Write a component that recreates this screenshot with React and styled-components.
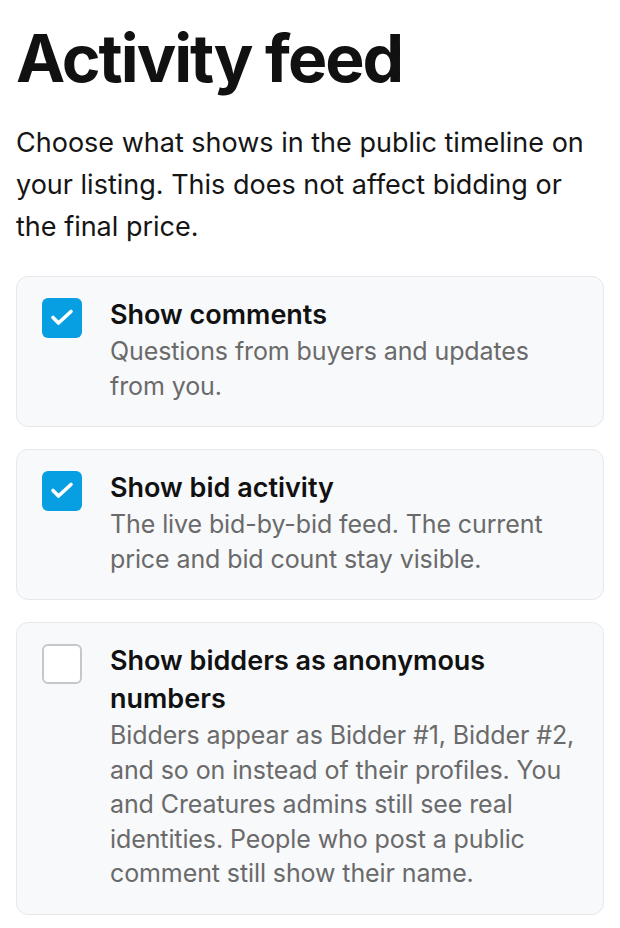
import React, { useState } from 'react';
import styled, { createGlobalStyle } from 'styled-components';

const GlobalStyle = createGlobalStyle`
  body {
    margin: 0;
    background: #ffffff;
    font-family: Inter, "Noto Sans", sans-serif;
    color: #111111;
  }
`

const Page = styled.div`
  padding: 20px 16px 14px 16px;
`

const Title = styled.h1`
  margin: 0;
  font-size: 66px;
  font-weight: 700;
  letter-spacing: -2px;
  line-height: 76px;
`

const Intro = styled.p`
  margin: 26px 0 0 0;
  font-size: 27px;
  line-height: 42px;
  letter-spacing: 0;
  color: #151515;
`

const List = styled.div`
  display: flex;
  flex-direction: column;
  gap: 22px;
  margin-top: 28px;
`

const Card = styled.label`
  display: flex;
  gap: 28px;
  padding: 21px 24px 23px 25px;
  background: #f8f9fb;
  border: 1px solid #e6e8eb;
  border-radius: 12px;
  cursor: pointer;
`

const Box = styled.span`
  flex: none;
  width: 40px;
  height: 40px;
  box-sizing: border-box;
  border-radius: 6px;
  display: flex;
  align-items: center;
  justify-content: center;
  background: ${(p) => (p.$on ? '#079fe2' : '#ffffff')};
  border: ${(p) => (p.$on ? 'none' : '2px solid #c4c7cb')};
`

const Text = styled.div`
  display: flex;
  flex-direction: column;
  margin-top: -2px;
`

const Label = styled.span`
  font-size: 27px;
  font-weight: 600;
  line-height: 38px;
  letter-spacing: 0;
  color: #111111;
`

const Desc = styled.span`
  font-size: 25px;
  line-height: 34.5px;
  letter-spacing: -0.1px;
  color: #6a6a6a;
`

const Check = () => (
  <svg width="24" height="24" viewBox="0 0 24 24" fill="none">
    <path d="M3 11.5l5.5 5.5L21 5.5" stroke="#fff" strokeWidth="3.6" strokeLinecap="round" strokeLinejoin="round" />
  </svg>
)

const options = [
  {
    id: 'comments',
    label: 'Show comments',
    desc: 'Questions from buyers and updates from you.',
    on: true,
  },
  {
    id: 'bids',
    label: 'Show bid activity',
    desc: 'The live bid-by-bid feed. The current price and bid count stay visible.',
    on: true,
  },
  {
    id: 'anon',
    label: 'Show bidders as anonymous numbers',
    desc: 'Bidders appear as Bidder #1, Bidder #2, and so on instead of their profiles. You and Creatures admins still see real identities. People who post a public comment still show their name.',
    on: false,
  },
]

const App = () => {
  const [state, setState] = useState(
    Object.fromEntries(options.map((o) => [o.id, o.on]))
  );

  const toggle = (id) => {
    setState({ ...state, [id]: !state[id] });
  }

  return (
    <>
      <GlobalStyle />
      <Page>
        <Title>Activity feed</Title>
        <Intro>
          Choose what shows in the public timeline on your listing. This does not affect bidding or the final price.
        </Intro>
        <List>
          {options.map((o) => (
            <Card key={o.id} onClick={() => toggle(o.id)}>
              <Box $on={state[o.id]}>{state[o.id] && <Check />}</Box>
              <Text>
                <Label>{o.label}</Label>
                <Desc>{o.desc}</Desc>
              </Text>
            </Card>
          ))}
        </List>
      </Page>
    </>
  );
};

export default App;
